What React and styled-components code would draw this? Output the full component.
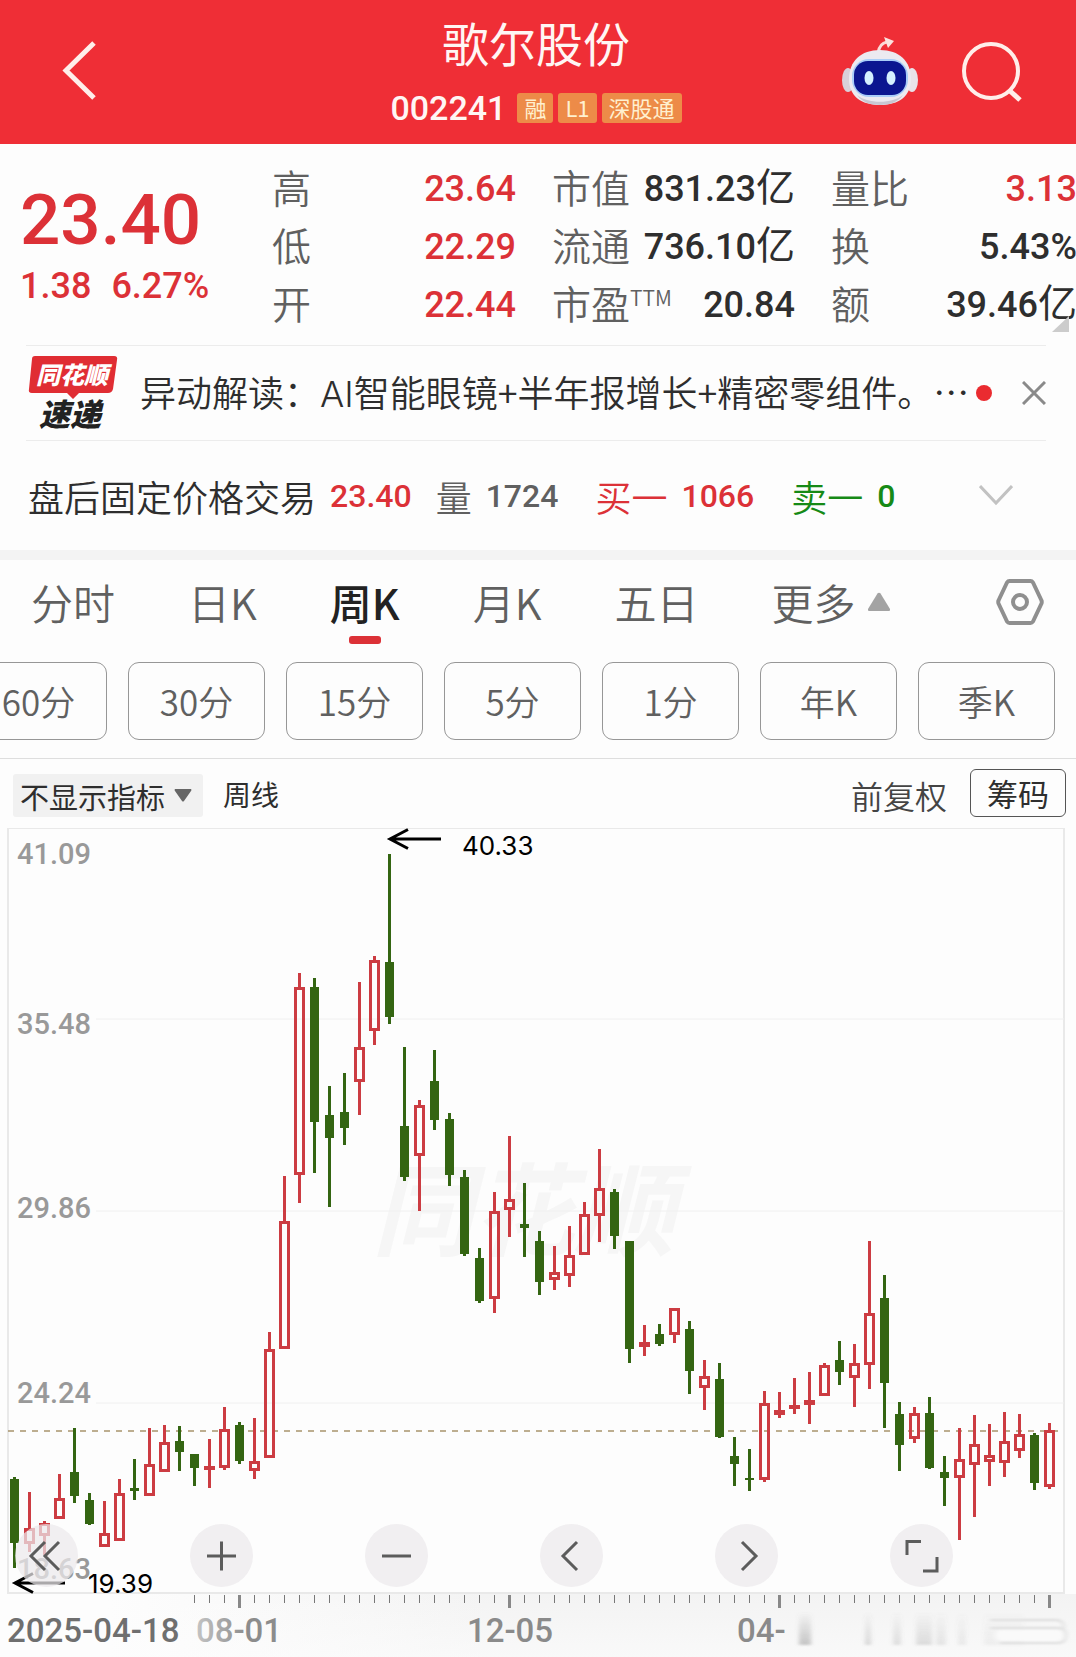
import React, { useState } from 'react';
import styled, { createGlobalStyle } from 'styled-components';

const GlobalStyle = createGlobalStyle`
  * {
    box-sizing: border-box;
  }
  body {
    margin: 0;
    background: #fdfdfd;
    color: #2e2e2e;
    font-family: "Noto Sans CJK SC", sans-serif;
  }
  button, select {
    font-family: inherit;
    color: inherit;
    background: none;
    border: none;
    padding: 0;
    margin: 0;
    cursor: pointer;
  }
  svg {
    display: block;
  }
`;

const RED = '#dc3137';
const NUM_FONT = 'Roboto, "Noto Sans CJK SC", sans-serif';

const Page = styled.div`
  width: 100%;
  overflow: hidden;
`;

/* header */

const Header = styled.header`
  display: grid;
  grid-template-columns: 1fr auto 1fr;
  height: 144px;
  background: #ef2e36;
  color: #fff6f4;
`;

const HeaderLeft = styled.div`
  display: flex;
  align-items: center;
  padding-left: 60px;
`;

const HeaderRight = styled.div`
  display: flex;
  align-items: center;
  justify-content: flex-end;
  gap: 42px;
  padding-right: 52px;
`;

const HeaderMid = styled.div`
  display: flex;
  flex-direction: column;
  align-items: center;
  padding: 12px 4px 0 0;
`;

const StockName = styled.h1`
  margin: 0;
  font-size: 47px;
  line-height: 60px;
  font-weight: 400;
`;

const CodeRow = styled.div`
  display: flex;
  align-items: center;
  gap: 5px;
  height: 72px;
`;

const Code = styled.span`
  font-family: ${NUM_FONT};
  font-size: 34px;
  font-weight: 500;
  margin-right: 6px;
`;

const Tag = styled.span`
  padding: 0 7px;
  height: 30px;
  border-radius: 3px;
  background: #ed8b48;
  color: #fff0cf;
  font-size: 22px;
  line-height: 28px;
`;

/* quote */

const Quote = styled.section`
  position: relative;
  display: grid;
  grid-template-columns: 216fr 244fr 243fr 246fr;
  column-gap: 36px;
  height: 201px;
  padding: 16px 0 0 20px;
  margin-right: -1px;
`;

const PriceBox = styled.div`
  display: flex;
  flex-direction: column;
  padding-top: 18px;
  color: ${RED};
  font-family: ${NUM_FONT};
  font-weight: 500;
`;

const Price = styled.div`
  font-size: 71px;
  line-height: 84px;
`;

const Change = styled.div`
  display: flex;
  gap: 20px;
  font-size: 36px;
  line-height: 48px;
`;

const StatList = styled.dl`
  margin: 0;
`;

const Stat = styled.div`
  display: flex;
  align-items: center;
  justify-content: space-between;
  height: 58px;
  white-space: nowrap;
`;

const StatLabel = styled.dt`
  display: flex;
  padding-bottom: 6px;
  color: #606060;
  font-size: 39px;
  line-height: 52px;
  font-weight: 350;

  small {
    font-size: 21px;
    line-height: 42px;
  }
`;

const StatValue = styled.dd`
  display: flex;
  align-items: center;
  margin: 0;
  font-family: ${NUM_FONT};
  font-size: 36px;
  font-weight: 500;
  color: ${props => (props.$up ? RED : '#2e2e2e')};

  span {
    padding-bottom: 3px;
    font-size: 39px;
    line-height: 52px;
    font-weight: 400;
  }
`;

const Corner = styled.i`
  position: absolute;
  right: 8px;
  bottom: 13px;
  border-style: solid;
  border-width: 0 0 16px 17px;
  border-color: transparent transparent #ccc transparent;
`;

/* news */

const News = styled.section`
  display: flex;
  align-items: center;
  height: 96px;
  margin: 0 30px 0 26px;
  border-top: 1px solid #ececec;
  border-bottom: 1px solid #ececec;
`;

const NewsLogo = styled.div`
  flex: none;
  width: 114px;
`;

const NewsText = styled.a`
  flex: 1;
  min-width: 0;
  overflow: hidden;
  white-space: nowrap;
  padding-bottom: 2px;
  font-size: 36px;
  line-height: 52px;
  color: #2e2e2e;
  text-decoration: none;
  font-weight: 350;

  span {
    font-family: Inter, sans-serif;
  }
`;

const Dot = styled.i`
  flex: none;
  width: 16px;
  height: 16px;
  border-radius: 50%;
  background: #ea2b30;
  margin: 0 30px 0 5px;
`;

/* after-hours trade */

const AfterHours = styled.section`
  display: flex;
  align-items: center;
  height: 109px;
  padding: 0 63px 0 28px;
  font-size: 36px;
`;

const Pair = styled.span`
  display: flex;
  align-items: center;
  gap: 14px;
  margin-right: ${props => props.$space || 37}px;
  color: ${props => props.$color};
  font-weight: 350;
  white-space: nowrap;

  b {
    font-family: ${NUM_FONT};
    font-size: 32px;
    font-weight: 500;
    color: ${props => props.$numColor || props.$color};
  }
`;

const Expand = styled.button`
  margin-left: auto;
`;

const Band = styled.div`
  height: 10px;
  background: #f3f3f3;
`;

/* tabs */

const Tabs = styled.nav`
  display: flex;
  align-items: flex-start;
  gap: 73px;
  height: 102px;
  padding: 0 32px 0 31px;
`;

const Tab = styled.button`
  display: flex;
  flex-direction: column;
  align-items: center;
  height: 86px;
  padding-top: 12px;
  font-size: 42px;
  line-height: 60px;
  font-weight: ${props => (props.$active ? 500 : 350)};
  color: ${props => (props.$active ? '#222' : '#606060')};
  white-space: nowrap;

  &::after {
    content: '';
    width: 32px;
    height: 8px;
    border-radius: 3px;
    margin-top: 4px;
    background: ${props => (props.$active ? RED : 'transparent')};
  }
`;

const MoreTab = styled(Tab)`
  flex-direction: row;
  align-items: flex-start;
  gap: 11px;

  &::after {
    display: none;
  }
  svg {
    margin-top: 20px;
  }
`;

const Settings = styled.button`
  margin-left: auto;
  margin-top: 18px;
`;

const Periods = styled.div`
  display: flex;
  justify-content: flex-end;
  gap: 21px;
  height: 97px;
  padding-right: 21px;
  border-bottom: 1px solid #dedede;
`;

const Chip = styled.button`
  flex: none;
  width: 137px;
  height: 78px;
  padding-bottom: 2px;
  border: 1px solid #979797;
  border-radius: 11px;
  color: #606060;
  font-size: 35px;
  font-weight: 350;
`;

/* chart toolbar */

const ChartBar = styled.div`
  display: flex;
  align-items: center;
  height: 69px;
  padding: 0 10px 0 13px;
`;

const IndicatorBox = styled.label`
  position: relative;
  margin: 4px 20px 0 0;
  background: #f1f1f1;
  border-radius: 3px;

  svg {
    position: absolute;
    right: 11px;
    top: 15px;
    pointer-events: none;
  }
`;

const IndicatorSelect = styled.select`
  appearance: none;
  height: 43px;
  padding: 0 37px 0 7px;
  font-size: 29px;
`;

const LineType = styled.span`
  font-size: 28px;
  margin-right: auto;
`;

const Adjust = styled.button`
  padding-top: 3px;
  margin-right: 23px;
  font-size: 32px;
  font-weight: 350;
  color: #444;
`;

const ChipsButton = styled.button`
  width: 96px;
  height: 48px;
  margin-bottom: 2px;
  border: 1px solid #555;
  border-radius: 6px;
  font-size: 31px;
  line-height: 42px;
`;

/* chart */

const ChartWrap = styled.section`
  position: relative;

  > svg {
    width: 100%;
    height: auto;
  }
  .num {
    font-family: ${NUM_FONT};
    font-weight: 500;
  }
  .mark {
    font-family: Inter, sans-serif;
    font-size: 26px;
  }
`;

const Controls = styled.div`
  position: absolute;
  left: 15px;
  right: 123px;
  bottom: 70px;
  display: flex;
  justify-content: space-between;
`;

const RoundButton = styled.button`
  width: 63px;
  height: 63px;
  border-radius: 50%;
  background: rgba(236, 233, 235, 0.72);
`;

const STATS = [
  [['高', '23.64', '', true], ['低', '22.29', '', true], ['开', '22.44', '', true]],
  [['市值', '831.23', '亿'], ['流通', '736.10', '亿'], ['市盈', '20.84', '', false, 'TTM']],
  [['量比', '3.13', '', true], ['换', '5.43%', ''], ['额', '39.46', '亿']],
];

const TABS = ['分时', '日K', '周K', '月K', '五日'];
const PERIODS = ['60分', '30分', '15分', '5分', '1分', '年K', '季K'];

// [up, high, body top, body bottom, low] in chart units
const CANDLES = [
  [0, 1477, 1479, 1543, 1568], [1, 1492, 1528, 1544, 1552], [1, 1521, 1523, 1536, 1555],
  [1, 1474, 1498, 1519, 1519], [0, 1428, 1472, 1496, 1503], [0, 1493, 1500, 1524, 1525],
  [1, 1501, 1533, 1547, 1547], [1, 1479, 1493, 1541, 1541], [0, 1459, 1488, 1491, 1500],
  [1, 1428, 1464, 1496, 1496], [1, 1425, 1442, 1472, 1472], [0, 1426, 1441, 1452, 1471],
  [0, 1454, 1454, 1468, 1486], [1, 1439, 1466, 1470, 1488], [1, 1407, 1429, 1468, 1470],
  [0, 1422, 1425, 1461, 1464], [1, 1418, 1461, 1471, 1479], [1, 1332, 1349, 1458, 1458],
  [1, 1176, 1221, 1349, 1349], [1, 973, 987, 1175, 1203], [0, 978, 987, 1122, 1173],
  [0, 1086, 1115, 1138, 1207], [0, 1073, 1112, 1128, 1145], [1, 982, 1047, 1082, 1115],
  [1, 956, 960, 1031, 1045], [0, 854, 962, 1017, 1024], [0, 1047, 1126, 1177, 1181],
  [1, 1100, 1105, 1156, 1211], [0, 1050, 1081, 1120, 1130], [0, 1113, 1119, 1175, 1186],
  [0, 1170, 1177, 1254, 1256], [0, 1248, 1258, 1301, 1303], [1, 1192, 1211, 1299, 1313],
  [1, 1136, 1199, 1210, 1237], [0, 1183, 1224, 1228, 1257], [0, 1231, 1241, 1282, 1295],
  [1, 1246, 1272, 1280, 1290], [1, 1226, 1255, 1276, 1287], [1, 1202, 1214, 1255, 1255],
  [1, 1149, 1188, 1216, 1242], [0, 1189, 1192, 1236, 1249], [0, 1241, 1241, 1349, 1363],
  [1, 1325, 1342, 1347, 1356], [0, 1324, 1334, 1344, 1346], [1, 1308, 1308, 1335, 1343],
  [0, 1321, 1329, 1371, 1394], [1, 1360, 1376, 1388, 1410], [0, 1363, 1379, 1437, 1438],
  [0, 1437, 1456, 1464, 1486], [0, 1449, 1478, 1480, 1491], [1, 1391, 1403, 1480, 1482],
  [1, 1392, 1410, 1415, 1418], [1, 1378, 1405, 1409, 1414], [1, 1372, 1400, 1405, 1424],
  [1, 1363, 1365, 1396, 1396], [0, 1341, 1360, 1372, 1385], [1, 1344, 1363, 1378, 1407],
  [1, 1241, 1313, 1365, 1389], [0, 1275, 1298, 1383, 1428], [0, 1402, 1414, 1445, 1471],
  [1, 1407, 1413, 1439, 1443], [0, 1397, 1413, 1468, 1469], [0, 1456, 1472, 1478, 1506],
  [1, 1428, 1459, 1478, 1540], [1, 1415, 1444, 1465, 1517], [1, 1424, 1455, 1462, 1486],
  [1, 1412, 1441, 1463, 1477], [1, 1414, 1434, 1451, 1458], [0, 1433, 1435, 1483, 1490],
  [1, 1423, 1430, 1487, 1489],
];

const PRICE_LABELS = [['41.09', 864], ['35.48', 1034], ['29.86', 1218], ['24.24', 1403], ['18.63', 1579]];
const TICKS = Array.from({ length: 58 }, (_, i) => i + 12);
const SMEARS = [[799, 12, 0.4], [865, 6, 0.25], [893, 8, 0.2], [916, 16, 0.22], [936, 10, 0.15], [958, 8, 0.12], [984, 40, 0.08]];

function Candle({ index, data }) {
  const [up, high, top, bottom, low] = data;
  const x = 14.5 + index * 15;
  if (!up) {
    return (
      <g fill="#346512">
        <rect x={x - 1.5} y={high} width="3" height={low - high} />
        <rect x={x - 4.5} y={top} width="9" height={bottom - top} />
      </g>
    );
  }
  return (
    <g fill="#cc3c42">
      <rect x={x - 1.5} y={high} width="3" height={top - high} />
      <rect x={x - 1.5} y={bottom} width="3" height={low - bottom} />
      {bottom - top > 6 ? (
        <rect x={x - 4} y={top + 1.5} width="8" height={bottom - top - 3} fill="none" stroke="#cc3c42" strokeWidth="3" />
      ) : (
        <rect x={x - 5.5} y={top} width="11" height={bottom - top} />
      )}
    </g>
  );
}

function KLineChart() {
  return (
    <svg viewBox="0 828 1076 829" role="img" aria-label="周线">
      <defs>
        <linearGradient id="axis" x1="0" x2="1" y1="0" y2="0">
          <stop offset="0.1" stopColor="#f3f3f3" stopOpacity="0" />
          <stop offset="0.45" stopColor="#f3f3f3" />
        </linearGradient>
        <linearGradient id="axisDown" x1="0" x2="0" y1="0" y2="1">
          <stop offset="0" stopColor="#fdfdfd" stopOpacity="0" />
          <stop offset="1" stopColor="#fdfdfd" stopOpacity="0.6" />
        </linearGradient>
        <linearGradient id="smear" x1="0" x2="0" y1="0" y2="1">
          <stop offset="0" stopColor="#777" stopOpacity="0" />
          <stop offset="1" stopColor="#777" />
        </linearGradient>
        <linearGradient id="dateFade" x1="0" x2="1" y1="0" y2="0">
          <stop offset="0" stopColor="#c4c4c4" />
          <stop offset="0.6" stopColor="#8c8c8c" />
        </linearGradient>
        <filter id="soft"><feGaussianBlur stdDeviation="2 1" /></filter>
      </defs>

      <rect x="0" y="1594" width="1076" height="63" fill="url(#axis)" />
      <rect x="0" y="1594" width="1076" height="63" fill="url(#axisDown)" />

      <text x="372" y="1248" fontSize="101" fontWeight="700" fontStyle="italic" fill="#f6f6f6">同花顺</text>

      <rect x="8" y="828" width="1056" height="765" fill="none" stroke="#e9e9e9" strokeWidth="2" />
      <g stroke="#f0f0f0" strokeWidth="1">
        <line x1="96" x2="1064" y1="1019" y2="1019" />
        <line x1="96" x2="1064" y1="1211" y2="1211" />
        <line x1="96" x2="1064" y1="1403" y2="1403" />
      </g>

      {PRICE_LABELS.map(([price, y]) => (
        <text key={price} className="num" x="17" y={y} fontSize="29" fill="#999">{price}</text>
      ))}

      <line x1="8" x2="1064" y1="1431" y2="1431" stroke="#a8946c" strokeWidth="1.5" strokeDasharray="6 6" />
      {CANDLES.map((data, i) => <Candle key={i} index={i} data={data} />)}

      <g fill="none" stroke="#000" strokeWidth="3">
        <path d="M441 839H390M408 829.5L390 839L408 848.5" />
        <path d="M65 1583H15M33 1573.5L15 1583L33 1592.5" />
      </g>
      <text className="mark" x="462" y="855">40.33</text>
      <text className="mark" x="88" y="1593">19.39</text>

      {TICKS.map(i => {
        const major = (i - 15) % 18 === 0;
        const w = major ? 3 : 1;
        return <rect key={i} x={14.5 + i * 15 - w / 2} y="1595" width={w} height={major ? 13 : 8} fill={major ? '#888' : '#777'} />;
      })}

      <g className="num" fontSize="33" fill="#8a8a8a">
        <text x="7" y="1642" fill="#6f6f6f">2025-04-18</text>
        <text x="239" y="1642" textAnchor="middle" fill="url(#dateFade)">08-01</text>
        <text x="510" y="1642" textAnchor="middle">12-05</text>
        <text x="737" y="1642">04-</text>
      </g>

      <g filter="url(#soft)">
        {SMEARS.map(([x, w, o]) => (
          <rect key={x} x={x} y="1612" width={w} height="33" fill="url(#smear)" opacity={o} />
        ))}
        <path d="M990 1620H1056Q1064 1620 1064 1628M990 1628H1058Q1066 1628 1066 1635Q1066 1643 1058 1643H1000" fill="none" stroke="#dcdcdc" strokeWidth="2" />
        <rect x="996" y="1630" width="66" height="11" rx="5" fill="#fafafa" />
      </g>
    </svg>
  );
}

const CONTROLS = [
  ['最早', 'M30 18L16 32L30 46M44 18L30 32L44 46'],
  ['放大', 'M17 32H46M31.5 17.5V46.5'],
  ['缩小', 'M17 32H46'],
  ['前移', 'M37 18L23 32L37 46'],
  ['后移', 'M27 18L41 32L27 46'],
  ['全屏', 'M17 31V17.5H31M47 33V47H33'],
];

function Robot() {
  return (
    <svg width="76" height="70" viewBox="0 0 76 70">
      <path d="M36 16C37 9 40 6 45 5" fill="none" stroke="#fbd9d6" strokeWidth="3" />
      <path d="M42 0L52 4L46 11Z" fill="#fbe3df" />
      <ellipse cx="6" cy="43" rx="6" ry="12" fill="#d9d0da" />
      <ellipse cx="70" cy="43" rx="6" ry="12" fill="#e9e2e8" />
      <path d="M38 13C57 13 69 24 69 42C69 59 57 68 38 68C19 68 7 59 7 42C7 24 19 13 38 13Z" fill="#eceaf0" />
      <path d="M15 58C25 67 51 67 61 58C56 65 48 68 38 68C28 68 20 65 15 58Z" fill="#c9c7d2" />
      <rect x="10" y="22" width="56" height="38" rx="17" fill="#a9cdf8" />
      <rect x="12" y="24" width="52" height="34" rx="14" fill="#0b1690" />
      <ellipse cx="27" cy="41" rx="4.5" ry="7" fill="#d5f1ff" />
      <ellipse cx="49" cy="41" rx="4.5" ry="7" fill="#d5f1ff" />
    </svg>
  );
}

export default function App() {
  const [tab, setTab] = useState('周K');

  return (
    <Page>
      <GlobalStyle />
      <Header>
        <HeaderLeft>
          <button aria-label="返回">
            <svg width="38" height="62" viewBox="0 0 38 62" fill="none" stroke="#ffeeea" strokeWidth="5">
              <path d="M34 2L6 29.5L34 57" />
            </svg>
          </button>
        </HeaderLeft>
        <HeaderMid>
          <StockName>歌尔股份</StockName>
          <CodeRow>
            <Code>002241</Code>
            <Tag>融</Tag>
            <Tag>L1</Tag>
            <Tag>深股通</Tag>
          </CodeRow>
        </HeaderMid>
        <HeaderRight>
          <button aria-label="助手"><Robot /></button>
          <button aria-label="搜索">
            <svg width="64" height="62" viewBox="0 0 64 62" fill="none" stroke="#ffeeea" strokeWidth="4">
              <circle cx="31" cy="30" r="27" />
              <path d="M50 50L60 59" strokeWidth="5" />
            </svg>
          </button>
        </HeaderRight>
      </Header>

      <Quote>
        <PriceBox>
          <Price>23.40</Price>
          <Change><span>1.38</span><span>6.27%</span></Change>
        </PriceBox>
        {STATS.map((list, i) => (
          <StatList key={i}>
            {list.map(([label, value, unit, up, sup]) => (
              <Stat key={label}>
                <StatLabel>{label}{sup && <small>{sup}</small>}</StatLabel>
                <StatValue $up={up}>{value}{unit && <span>{unit}</span>}</StatValue>
              </Stat>
            ))}
          </StatList>
        ))}
        <Corner />
      </Quote>

      <News>
        <NewsLogo>
          <svg width="94" height="92" viewBox="0 -8 94 92">
            <path d="M9 1H88Q92 1 91 5L87 34Q86 38 82 38H53L47 44L41 38H6Q2 38 3 34L6 4Q6 1 9 1Z" fill="#e02d33" />
            <text x="46" y="29" textAnchor="middle" fontSize="24" fontWeight="900" fontStyle="italic" fill="#fff">同花顺</text>
            <text x="44" y="71" textAnchor="middle" fontSize="31" fontWeight="900" fontStyle="italic" fill="#222">速递</text>
          </svg>
        </NewsLogo>
        <NewsText href="#">异动解读：<span>AI</span>智能眼镜+半年报增长+精密零组件。…</NewsText>
        <Dot />
        <button aria-label="关闭">
          <svg width="24" height="24" viewBox="0 0 24 24" stroke="#8a8a8a" strokeWidth="3">
            <path d="M1 1L23 23M23 1L1 23" />
          </svg>
        </button>
      </News>

      <AfterHours>
        <Pair $color="#2e2e2e" $numColor={RED} $space={24}>盘后固定价格交易 <b>23.40</b></Pair>
        <Pair $color="#606060">量 <b>1724</b></Pair>
        <Pair $color={RED}>买一 <b>1066</b></Pair>
        <Pair $color="#168a16">卖一 <b>0</b></Pair>
        <Expand aria-label="展开">
          <svg width="34" height="22" viewBox="0 0 34 22" fill="none" stroke="#c2c2c2" strokeWidth="3">
            <path d="M1 1L17 18L33 1" />
          </svg>
        </Expand>
      </AfterHours>
      <Band />

      <Tabs>
        {TABS.map(name => (
          <Tab key={name} $active={name === tab} onClick={() => setTab(name)}>{name}</Tab>
        ))}
        <MoreTab>
          更多
          <svg width="24" height="20" viewBox="0 0 24 20" fill="#a3a3a3">
            <path d="M10.500 1.500Q12 0 13.500 1.500L23 17Q23.500 19 22 19H2Q.5 19 1 17Z" />
          </svg>
        </MoreTab>
        <Settings aria-label="设置">
          <svg width="48" height="48" viewBox="0 0 48 48" fill="none" stroke="#8f8f8f" strokeWidth="4" strokeLinejoin="round">
            <path d="M13.500 3H34.500Q36 3 37 4.500L45.500 22.500Q46 24 45.500 25.500L37 43.500Q36 45 34.500 45H13.500Q12 45 11 43.500L2.500 25.500Q2 24 2.500 22.500L11 4.500Q12 3 13.500 3Z" />
            <circle cx="24" cy="24" r="7" />
          </svg>
        </Settings>
      </Tabs>

      <Periods>
        {PERIODS.map(name => <Chip key={name}>{name}</Chip>)}
      </Periods>

      <ChartBar>
        <IndicatorBox>
          <IndicatorSelect aria-label="指标">
            <option>不显示指标</option>
          </IndicatorSelect>
          <svg width="18" height="14" viewBox="0 0 18 14" fill="#666">
            <path d="M1 0H17Q18 1 17 2L10 12Q9 13 8 12L1 2Q0 1 1 0Z" />
          </svg>
        </IndicatorBox>
        <LineType>周线</LineType>
        <Adjust>前复权</Adjust>
        <ChipsButton>筹码</ChipsButton>
      </ChartBar>

      <ChartWrap>
        <KLineChart />
        <Controls>
          {CONTROLS.map(([label, d]) => (
            <RoundButton key={label} aria-label={label}>
              <svg width="63" height="63" viewBox="0 0 63 63" fill="none" stroke="#5c5c5c" strokeWidth="3">
                <path d={d} />
              </svg>
            </RoundButton>
          ))}
        </Controls>
      </ChartWrap>
    </Page>
  );
}
